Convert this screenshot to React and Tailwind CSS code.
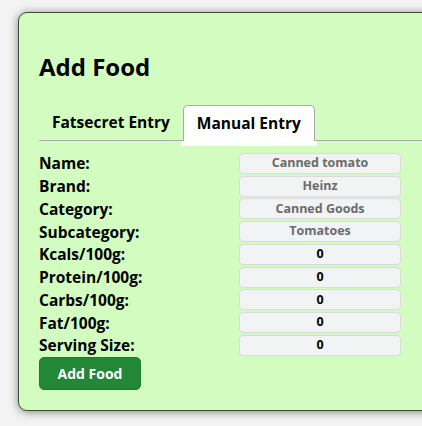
import React from 'react'

const fields = [
  { label: 'Name:', value: 'Canned tomato', muted: true },
  { label: 'Brand:', value: 'Heinz', muted: true },
  { label: 'Category:', value: 'Canned Goods', muted: true },
  { label: 'Subcategory:', value: 'Tomatoes', muted: true },
  { label: 'Kcals/100g:', value: '0' },
  { label: 'Protein/100g:', value: '0' },
  { label: 'Carbs/100g:', value: '0' },
  { label: 'Fat/100g:', value: '0' },
  { label: 'Serving Size:', value: '0' },
]

const App = () => {
  return (
    <div className="h-screen w-screen overflow-hidden bg-[#f3f3f3] pt-[12px] pl-[18px] font-['Open_Sans','Liberation_Sans',sans-serif]">
      <div className="w-[460px] rounded-[9px] border border-[#3d4a3a] bg-[#d3fdc0] px-[20px] pt-[20px] pb-[20px] shadow-[0_1px_8px_rgba(60,80,50,0.65)]">
        <h1 className="mt-[19px] text-[24px] leading-[29px] font-bold text-black">Add Food</h1>

        <div className="mt-[24px] flex border-b border-[#aaa]">
          <div className="h-[35px] px-[13px] flex items-center text-[15.5px] font-bold text-black">Fatsecret Entry</div>
          <div className="relative -mb-px h-[36px] px-[13px] flex items-center rounded-t-[5px] border border-b-0 border-[#aaa] bg-white text-[15.5px] font-bold text-black">
            Manual Entry
            <div className="absolute -left-[3px] -right-[3px] -bottom-[5px] h-[5px] bg-white"></div>
          </div>
        </div>

        <div className="mt-[11px] flex flex-col">
          {fields.map((f, i) => (
            <div key={i} className="flex h-[22.75px] items-center">
              <div className="w-[200px] text-[15.5px] font-bold leading-[18px] text-black">{f.label}</div>
              <div className={`flex h-[21px] w-[162px] items-center justify-center rounded-[4px] border border-[#dadada] bg-[#f2f3f5] text-[12.5px] font-bold ${f.muted ? 'text-[#6b6b6b]' : 'text-black'}`}>
                {f.value}
              </div>
            </div>
          ))}
        </div>

        <button className="mt-0 h-[33px] w-[102px] rounded-[5px] border border-[#1d7a32] bg-[#228838] text-[14px] font-bold text-white">
          Add Food
        </button>
      </div>
    </div>
  )
}

export default App
